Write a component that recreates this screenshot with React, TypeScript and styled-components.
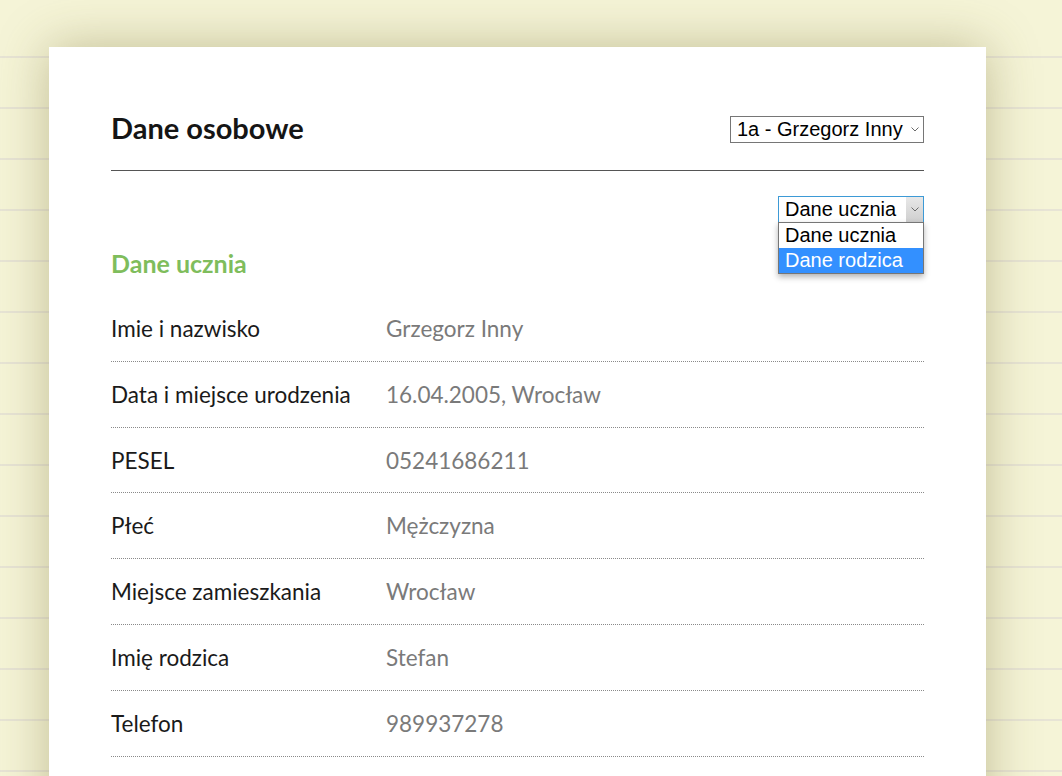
import styled, { createGlobalStyle } from "styled-components";

const GlobalStyle = createGlobalStyle`
  html, body {
    margin: 0;
    padding: 0;
  }
  body {
    font-family: Lato, "Noto Sans", sans-serif;
    background-color: #f5f4d7;
    background-image: repeating-linear-gradient(
      to bottom,
      #f5f4d7 0,
      #f5f4d7 49px,
      #e7e4d5 49px,
      #e7e4d5 51px
    );
    background-position: 0 7px;
    min-height: 776px;
    overflow: hidden;
  }
`;

const Page = styled.div`
  padding: 47px 0 0 49px;
`;

const Card = styled.div`
  width: 937px;
  box-sizing: border-box;
  background: #fff;
  padding: 0 62px 80px 62px;
  box-shadow: 0 0 48px rgba(110, 100, 40, 0.38);
`;

const Header = styled.div`
  display: flex;
  align-items: center;
  justify-content: space-between;
  padding: 69px 0 27px;
  border-bottom: 1px solid #555;
`;

const Title = styled.h1`
  margin: -5px 0 0 0;
  font-size: 29px;
  line-height: 27px;
  font-weight: 700;
  color: #151515;
`;

const Toolbar = styled.div`
  display: flex;
  justify-content: flex-end;
  margin-top: 25px;
`;

const SelectWrap = styled.div<{ $width: number }>`
  position: relative;
  width: ${(p) => p.$width}px;
  height: 27px;
`;

const SelectBox = styled.div<{ $focused?: boolean }>`
  box-sizing: border-box;
  height: 27px;
  display: flex;
  align-items: center;
  justify-content: space-between;
  border: 1px solid ${(p) => (p.$focused ? "#3d9ad6" : "#767676")};
  background: #fff;
  padding-left: 6px;
  font-family: "Liberation Sans", Arial, sans-serif;
  font-size: 20px;
  color: #000;
  cursor: default;
  white-space: nowrap;
`;

const ArrowBox = styled.span<{ $shaded?: boolean }>`
  align-self: stretch;
  width: 17px;
  display: flex;
  align-items: center;
  justify-content: center;
  background: ${(p) =>
    p.$shaded ? "linear-gradient(to bottom, #e8e8e8, #cfcfcf)" : "transparent"};
`;

const List = styled.ul`
  position: absolute;
  top: 26px;
  left: 0;
  right: 0;
  margin: 0;
  padding: 0;
  list-style: none;
  border: 1px solid #767676;
  background: #fff;
  box-shadow: 0 3px 6px rgba(0, 0, 0, 0.3);
  z-index: 2;
`;

const Option = styled.li<{ $active?: boolean }>`
  height: 25px;
  line-height: 25px;
  padding-left: 6px;
  font-family: "Liberation Sans", Arial, sans-serif;
  font-size: 20px;
  background: ${(p) => (p.$active ? "#3390ff" : "#fff")};
  color: ${(p) => (p.$active ? "#fff" : "#000")};
`;

const Section = styled.h2`
  margin: 26px 0 18px;
  font-size: 25px;
  line-height: 29px;
  font-weight: 700;
  color: #7fbd5c;
`;

const Row = styled.div`
  display: grid;
  grid-template-columns: 275px 1fr;
  padding: 20px 0 18.8px;
  border-bottom: 1px dotted #8a8a8a;
  font-size: 22.5px;
  line-height: 26px;
`;

const Label = styled.span`
  color: #1a1a1a;
`;

const Value = styled.span`
  color: #7a7a7a;
`;

const Chevron = () => (
  <svg width="8" height="5" viewBox="0 0 8 5">
    <polyline points="0.5,0.5 4,4 7.5,0.5" fill="none" stroke="#6b6b6b" strokeWidth="1" />
  </svg>
);

const rows: [string, string][] = [
  ["Imie i nazwisko", "Grzegorz Inny"],
  ["Data i miejsce urodzenia", "16.04.2005, Wrocław"],
  ["PESEL", "05241686211"],
  ["Płeć", "Mężczyzna"],
  ["Miejsce zamieszkania", "Wrocław"],
  ["Imię rodzica", "Stefan"],
  ["Telefon", "989937278"],
];

export default function App() {
  return (
    <>
      <GlobalStyle />
      <Page>
        <Card>
          <Header>
            <Title>Dane osobowe</Title>
            <SelectWrap $width={194}>
              <SelectBox>
                1a - Grzegorz Inny
                <ArrowBox>
                  <Chevron />
                </ArrowBox>
              </SelectBox>
            </SelectWrap>
          </Header>
          <Toolbar>
            <SelectWrap $width={146}>
              <SelectBox $focused>
                Dane ucznia
                <ArrowBox $shaded>
                  <Chevron />
                </ArrowBox>
              </SelectBox>
              <List>
                <Option>Dane ucznia</Option>
                <Option $active>Dane rodzica</Option>
              </List>
            </SelectWrap>
          </Toolbar>
          <Section>Dane ucznia</Section>
          {rows.map(([label, value]) => (
            <Row key={label}>
              <Label>{label}</Label>
              <Value>{value}</Value>
            </Row>
          ))}
        </Card>
      </Page>
    </>
  );
}
